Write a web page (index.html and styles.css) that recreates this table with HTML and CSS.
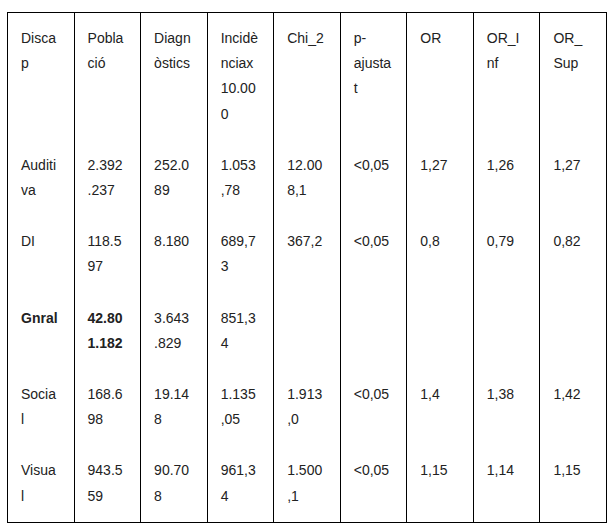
FILE: index.html
```html
<!DOCTYPE html>
<html lang="ca">
<head>
<meta charset="utf-8">
<link rel="stylesheet" href="styles.css">
</head>
<body>
<table class="data">
  <tr>
    <td>Discap</td><td>Població</td><td>Diagnòstics</td><td>Incidènciax 10.000</td><td>Chi_2</td><td>p-ajustat</td><td>OR</td><td>OR_Inf</td><td>OR_Sup</td>
  </tr>
  <tr>
    <td>Auditiva</td><td>2.392.237</td><td>252.089</td><td>1.053,78</td><td>12.008,1</td><td>&lt;0,05</td><td>1,27</td><td>1,26</td><td>1,27</td>
  </tr>
  <tr>
    <td>DI</td><td>118.597</td><td>8.180</td><td>689,73</td><td>367,2</td><td>&lt;0,05</td><td>0,8</td><td>0,79</td><td>0,82</td>
  </tr>
  <tr>
    <td class="b">Gnral</td><td class="b">42.801.182</td><td>3.643.829</td><td>851,34</td><td></td><td></td><td></td><td></td><td></td>
  </tr>
  <tr>
    <td>Social</td><td>168.698</td><td>19.148</td><td>1.135,05</td><td>1.913,0</td><td>&lt;0,05</td><td>1,4</td><td>1,38</td><td>1,42</td>
  </tr>
  <tr>
    <td>Visual</td><td>943.559</td><td>90.708</td><td>961,34</td><td>1.500,1</td><td>&lt;0,05</td><td>1,15</td><td>1,14</td><td>1,15</td>
  </tr>
</table>
</body>
</html>
```
FILE: styles.css
```css
html, body {
  margin: 0;
  padding: 0;
  background: #fff;
}
body {
  padding: 12px 0 0 7px;
  font-family: "Liberation Sans", Arial, sans-serif;
  font-size: 14px;
  color: #222;
}
.data {
  width: 600px;
  table-layout: fixed;
  border-collapse: collapse;
  border: 1px solid #000;
}
.data td {
  border-left: 1px solid #000;
  border-right: 1px solid #000;
  padding: 13px 15px 13px 13px;
  line-height: 25.2px;
  vertical-align: top;
  overflow-wrap: anywhere;
}
.data .b {
  font-weight: bold;
}
```
